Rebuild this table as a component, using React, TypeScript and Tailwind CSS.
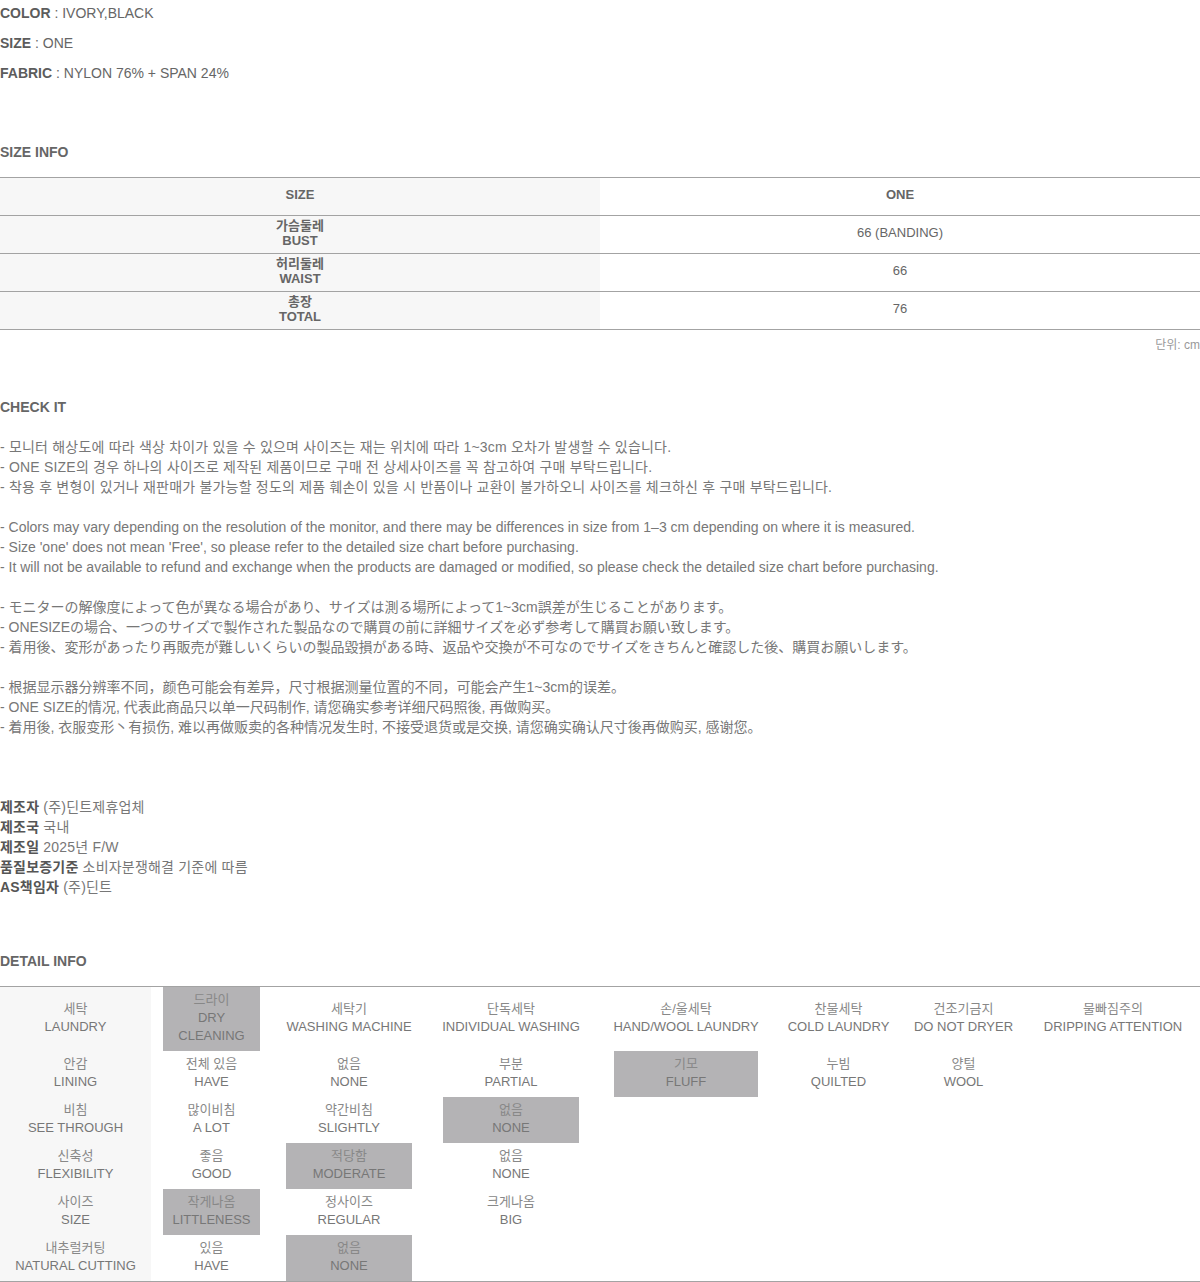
import React from "react";

type Cell = { lines: string[]; hl?: boolean } | null;

const colW = ["w-[151px]", "w-[121px]", "w-[154px]", "w-[170px]", "w-[180px]", "w-[125px]", "w-[125px]", "w-[174px]"];
const colPad = ["px-0", "px-[12px]", "px-[14px]", "px-[17px]", "px-[18px]", "px-0", "px-0", "px-0"];

const detailRows: Cell[][] = [
  [
    { lines: ["세탁", "LAUNDRY"] },
    { lines: ["드라이", "DRY", "CLEANING"], hl: true },
    { lines: ["세탁기", "WASHING MACHINE"] },
    { lines: ["단독세탁", "INDIVIDUAL WASHING"] },
    { lines: ["손/울세탁", "HAND/WOOL LAUNDRY"] },
    { lines: ["찬물세탁", "COLD LAUNDRY"] },
    { lines: ["건조기금지", "DO NOT DRYER"] },
    { lines: ["물빠짐주의", "DRIPPING ATTENTION"] },
  ],
  [
    { lines: ["안감", "LINING"] },
    { lines: ["전체 있음", "HAVE"] },
    { lines: ["없음", "NONE"] },
    { lines: ["부분", "PARTIAL"] },
    { lines: ["기모", "FLUFF"], hl: true },
    { lines: ["누빔", "QUILTED"] },
    { lines: ["양털", "WOOL"] },
    null,
  ],
  [
    { lines: ["비침", "SEE THROUGH"] },
    { lines: ["많이비침", "A LOT"] },
    { lines: ["약간비침", "SLIGHTLY"] },
    { lines: ["없음", "NONE"], hl: true },
    null,
    null,
    null,
    null,
  ],
  [
    { lines: ["신축성", "FLEXIBILITY"] },
    { lines: ["좋음", "GOOD"] },
    { lines: ["적당함", "MODERATE"], hl: true },
    { lines: ["없음", "NONE"] },
    null,
    null,
    null,
    null,
  ],
  [
    { lines: ["사이즈", "SIZE"] },
    { lines: ["작게나옴", "LITTLENESS"], hl: true },
    { lines: ["정사이즈", "REGULAR"] },
    { lines: ["크게나옴", "BIG"] },
    null,
    null,
    null,
    null,
  ],
  [
    { lines: ["내추럴커팅", "NATURAL CUTTING"] },
    { lines: ["있음", "HAVE"] },
    { lines: ["없음", "NONE"], hl: true },
    null,
    null,
    null,
    null,
    null,
  ],
];

const sizeRows = [
  { ko: "가슴둘레", en: "BUST", v: "66 (BANDING)" },
  { ko: "허리둘레", en: "WAIST", v: "66" },
  { ko: "총장", en: "TOTAL", v: "76" },
];

const KR = { fontFamily: '"Liberation Sans", "Noto Sans CJK KR", sans-serif' };
const JP = { fontFamily: '"Liberation Sans", "Noto Sans CJK JP", sans-serif' };
const SC = { fontFamily: '"Liberation Sans", "Noto Sans CJK SC", sans-serif' };

export default function App() {
  return (
    <div className="w-[1200px] bg-white text-[#666]" style={KR}>
      {/* Spec lines */}
      <div className="text-[14px]">
        <div className="h-[26px] leading-[26px] mb-[4px]">
          <span className="font-bold text-[#5c5c5c]">COLOR</span> : IVORY,BLACK
        </div>
        <div className="h-[26px] leading-[26px] mb-[4px]">
          <span className="font-bold text-[#5c5c5c]">SIZE</span> : ONE
        </div>
        <div className="h-[26px] leading-[26px]">
          <span className="font-bold text-[#5c5c5c]">FABRIC</span> : NYLON 76% + SPAN 24%
        </div>
      </div>

      {/* SIZE INFO */}
      <div className="mt-[56px] h-[20px] leading-[20px] text-[14px] font-bold text-[#666]">SIZE INFO</div>
      <div className="mt-[15px] border-t border-[#a3a3a3] text-[13px]">
        <div className="flex h-[38px] border-b border-[#a3a3a3]">
          <div className="w-[600px] bg-[#f7f7f7] flex items-center justify-center font-bold pb-[4px]">SIZE</div>
          <div className="w-[600px] flex items-center justify-center font-bold pb-[4px]">ONE</div>
        </div>
        {sizeRows.map((r) => (
          <div key={r.en} className="flex h-[38px] border-b border-[#a3a3a3]">
            <div className="w-[600px] bg-[#f7f7f7] flex flex-col items-center justify-center font-bold leading-[15px] pb-[4px]">
              <div>{r.ko}</div>
              <div>{r.en}</div>
            </div>
            <div className="w-[600px] flex items-center justify-center pb-[4px]">{r.v}</div>
          </div>
        ))}
      </div>
      <div className="mt-[7px] h-[16px] leading-[16px] text-[12px] text-right text-[#999]">단위: cm</div>

      {/* CHECK IT */}
      <div className="mt-[44px] h-[20px] leading-[20px] text-[14px] font-bold text-[#666]">CHECK IT</div>
      <div className="mt-[20px] text-[14px] leading-[20px] text-[#777]">
        <div className="tracking-[0.2px]">
          <div>- 모니터 해상도에 따라 색상 차이가 있을 수 있으며 사이즈는 재는 위치에 따라 1~3cm 오차가 발생할 수 있습니다.</div>
          <div>- ONE SIZE의 경우 하나의 사이즈로 제작된 제품이므로 구매 전 상세사이즈를 꼭 참고하여 구매 부탁드립니다.</div>
          <div>- 착용 후 변형이 있거나 재판매가 불가능할 정도의 제품 훼손이 있을 시 반품이나 교환이 불가하오니 사이즈를 체크하신 후 구매 부탁드립니다.</div>
        </div>
        <div className="mt-[20px]">
          <div>- Colors may vary depending on the resolution of the monitor, and there may be differences in size from 1–3 cm depending on where it is measured.</div>
          <div>- Size 'one' does not mean 'Free', so please refer to the detailed size chart before purchasing.</div>
          <div>- It will not be available to refund and exchange when the products are damaged or modified, so please check the detailed size chart before purchasing.</div>
        </div>
        <div className="mt-[20px]" style={JP}>
          <div>- モニターの解像度によって色が異なる場合があり、サイズは測る場所によって1~3cm誤差が生じることがあります。</div>
          <div>- ONESIZEの場合、一つのサイズで製作された製品なので購買の前に詳細サイズを必ず参考して購買お願い致します。</div>
          <div>- 着用後、変形があったり再販売が難しいくらいの製品毀損がある時、返品や交換が不可なのでサイズをきちんと確認した後、購買お願いします。</div>
        </div>
        <div className="mt-[20px]" style={SC}>
          <div>- 根据显示器分辨率不同，颜色可能会有差异，尺寸根据测量位置的不同，可能会产生1~3cm的误差。</div>
          <div>- ONE SIZE的情况, 代表此商品只以单一尺码制作, 请您确实参考详细尺码照後, 再做购买。</div>
          <div>- 着用後, 衣服变形丶有损伤, 难以再做贩卖的各种情况发生时, 不接受退货或是交换, 请您确实确认尺寸後再做购买, 感谢您。</div>
        </div>
      </div>

      {/* Manufacturer */}
      <div className="mt-[60px] text-[14px] leading-[20px] text-[#777] tracking-[0.2px]">
        <div><span className="font-bold text-[#555]">제조자</span> (주)딘트제휴업체</div>
        <div><span className="font-bold text-[#555]">제조국</span> 국내</div>
        <div><span className="font-bold text-[#555]">제조일</span> 2025년 F/W</div>
        <div><span className="font-bold text-[#555]">품질보증기준</span> 소비자분쟁해결 기준에 따름</div>
        <div><span className="font-bold text-[#555]">AS책임자</span> (주)딘트</div>
      </div>

      {/* DETAIL INFO */}
      <div className="mt-[54px] h-[20px] leading-[20px] text-[14px] font-bold text-[#666]">DETAIL INFO</div>
      <div className="mt-[15px] border-t border-b border-[#a3a3a3] text-[13px] leading-[18px] text-[#777]">
        {detailRows.map((row, ri) => (
          <div key={ri} className={`flex ${ri === 0 ? "h-[64px]" : "h-[46px]"}`}>
            {row.map((cell, ci) => (
              <div
                key={ci}
                className={`${colW[ci]} ${colPad[ci]} h-full shrink-0 ${ci === 0 ? "bg-[#f7f7f7]" : ""}`}
              >
                {cell && (
                  <div
                    className={`h-full flex flex-col items-center justify-center text-center pb-[2px] ${
                      cell.hl ? "bg-[#b4b3b5]" : ""
                    }`}
                  >
                    {cell.lines.map((l, li) => (
                      <div key={li} className={`whitespace-nowrap ${li === 0 ? "text-[#888]" : ""}`}>
                        {l}
                      </div>
                    ))}
                  </div>
                )}
              </div>
            ))}
          </div>
        ))}
      </div>
    </div>
  );
}
